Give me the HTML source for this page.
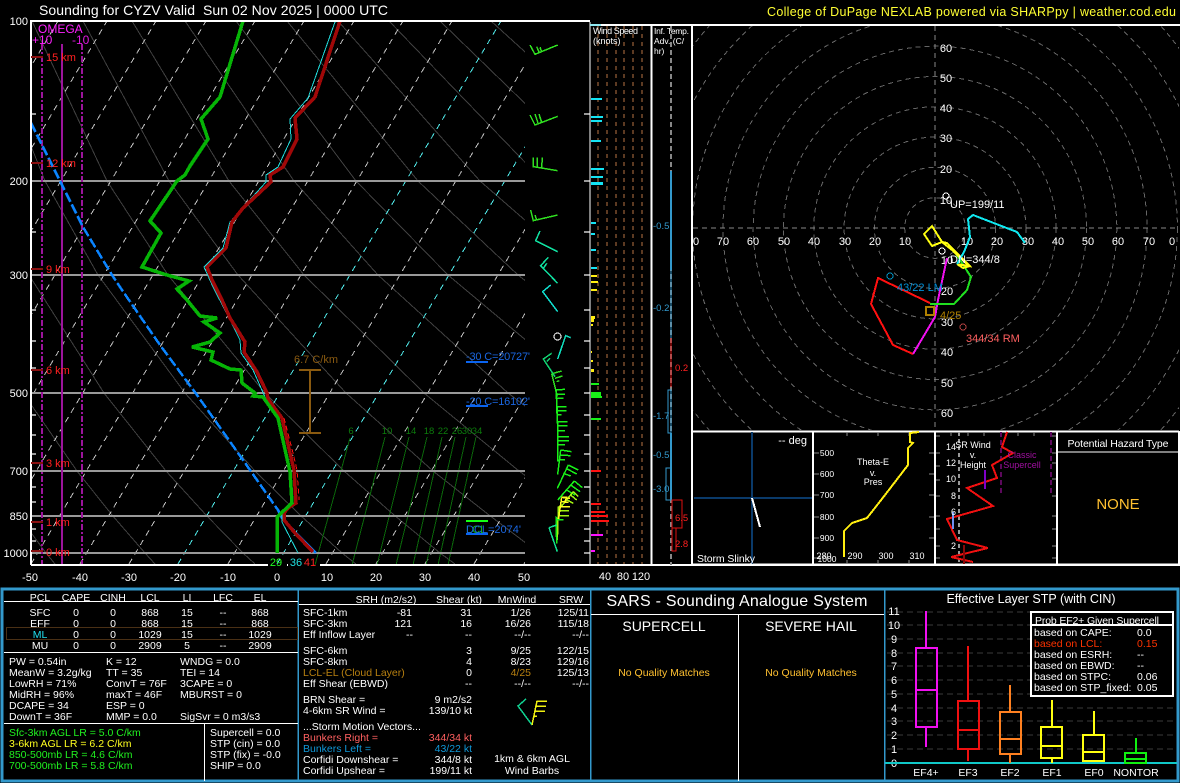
<!DOCTYPE html>
<html><head><meta charset="utf-8"><title>Sounding</title>
<style>
html,body{margin:0;padding:0;background:#000;width:1180px;height:783px;overflow:hidden}
svg{display:block}
text{font-family:"Liberation Sans",sans-serif;font-size:10.5px;fill:#fff;stroke:none;white-space:pre}
.e{text-anchor:end}.m{text-anchor:middle}
.a{font-size:11px}
.r{fill:#ff2020;font-size:11px}
.s{font-size:9px}
.t{font-size:8.5px}
.b{fill:#3399cc;font-size:9.5px}
.c{fill:#ff2020;font-size:9.5px}
.mx{fill:#0c7c0c;font-size:9.5px}
</style></head><body>
<svg width="1180" height="783" viewBox="0 0 1180 783" shape-rendering="crispEdges" fill="none">
<defs>
<clipPath id="sk"><rect x="31" y="21" width="494" height="544"/></clipPath>
<clipPath id="hd"><rect x="693" y="26" width="486" height="404"/></clipPath>
</defs>
<text x="39" y="15" style="font-size:14px" textLength="349" lengthAdjust="spacing">Sounding for CYZV Valid  Sun 02 Nov 2025 | 0000 UTC</text>
<text x="767" y="16" style="font-size:12.5px;fill:#ffff33" textLength="409" lengthAdjust="spacing">College of DuPage NEXLAB powered via SHARPpy | weather.cod.edu</text>

<g clip-path="url(#sk)">
<!-- dry adiabats -->
<g stroke="#404040" stroke-width="1">
<polyline points="-12,471 18,515 46,553 55,564"/>
<polyline points="23,393 77,471 112,515 145,553 155,564"/>
<polyline points="-41,275 23,393 77,471"/>
<polyline points="-17,181 29,275 104,393 166,471 206,515 243,553 255,564"/>
<polyline points="-19,21 45,181 98,275 185,393 255,471 300,515 342,553 356,564"/>
<polyline points="32,21 107,181 168,275 265,393 344,471 394,515 440,553 455,564"/>
<polyline points="83,21 169,181 238,275 346,393 433,471 489,515 539,553"/>
<polyline points="132,21 229,181 304,275 424,393 519,471 580,515"/>
<polyline points="185,21 294,181 378,275 508,393 611,471"/>
<polyline points="236,21 356,181 448,275 589,393"/>
<polyline points="287,21 418,181 518,275 670,393"/>
<polyline points="338,21 480,181 588,275"/>
<polyline points="389,21 543,181"/>
<polyline points="440,21 605,181"/>
<polyline points="491,21 667,181"/>
</g>
<!-- isotherms -->
<g stroke="#c0c0c0" stroke-width="1" stroke-dasharray="6 5">
<line x1="-265" y1="564" x2="58" y2="21"/>
<line x1="-216" y1="564" x2="107" y2="21"/>
<line x1="-167" y1="564" x2="156" y2="21"/>
<line x1="-117" y1="564" x2="206" y2="21"/>
<line x1="-68" y1="564" x2="255" y2="21"/>
<line x1="-19" y1="564" x2="304" y2="21"/>
<line x1="31" y1="564" x2="354" y2="21"/>
<line x1="80" y1="564" x2="403" y2="21"/>
<line x1="129" y1="564" x2="452" y2="21"/>
<line x1="228" y1="564" x2="551" y2="21"/>
<line x1="326" y1="564" x2="649" y2="21"/>
<line x1="376" y1="564" x2="699" y2="21"/>
<line x1="425" y1="564" x2="748" y2="21"/>
<line x1="474" y1="564" x2="797" y2="21"/>
<line x1="524" y1="564" x2="847" y2="21"/>
</g>
<g stroke="#50e8e8" stroke-width="1" stroke-dasharray="6 5">
<line x1="178" y1="564" x2="501" y2="21"/>
<line x1="277" y1="564" x2="600" y2="21"/>
</g>
<!-- mixing ratio -->
<g stroke="#0a660a" stroke-width="1">
<line x1="350" y1="438" x2="315" y2="565"/>
<line x1="385" y1="437" x2="352" y2="565"/>
<line x1="409" y1="437" x2="377" y2="565"/>
<line x1="427" y1="437" x2="396" y2="565"/>
<line x1="442" y1="437" x2="413" y2="565"/>
<line x1="455" y1="437" x2="426" y2="565"/>
<line x1="466" y1="437" x2="438" y2="565"/>
<line x1="476" y1="437" x2="448" y2="565"/>
</g>
<!-- pressure lines -->
<g stroke="#999" stroke-width="2">
<line x1="31" x2="525" y1="181" y2="181"/>
<line x1="31" x2="525" y1="275" y2="275"/>
<line x1="31" x2="525" y1="393" y2="393"/>
<line x1="31" x2="525" y1="471" y2="471"/>
<line x1="31" x2="525" y1="516" y2="516"/>
<line x1="31" x2="525" y1="553" y2="553"/>
</g>
<!-- omega -->
<line x1="62" y1="44" x2="62" y2="565" stroke="#9c149c" stroke-width="2"/>
<line x1="42" y1="44" x2="42" y2="565" stroke="#9c149c" stroke-width="2" stroke-dasharray="6 2 2 2"/>
<line x1="82" y1="44" x2="82" y2="565" stroke="#9c149c" stroke-width="2" stroke-dasharray="6 2 2 2"/>
<!-- parcel -->
<polyline points="31,123 60,181 83,227 112,275 122,290 160,345 197,395 243,460 278,510" stroke="#0a84ff" stroke-width="2.5" stroke-dasharray="10 3"/>
<polyline points="278,510 282,518 298,535 316,553" stroke="#0a84ff" stroke-width="2.5"/>
<!-- temp -->
<polyline points="335,22 308,98 290,119 291,139 278,167 266,175 266,182 230,222 223,248 204,267 213,287 230,320 240,340 241,353 253,370 265,397 278,418 290,472 292,503 282,513 282,522 298,553" stroke="#20d8d8" stroke-width="1"/>
<polyline points="340,21 315,97 295,118 297,139 283,167 270,175 271,182 243,208 232,222 226,248 207,267 212,280 222,300 230,318 245,342 244,352 257,372 267,393 268,399 282,418 290,453 294,470 296,503 288,508 284,513 284,520 295,533 313,552" stroke="#a00808" stroke-width="3.5"/>
<polyline points="284,418 293,453 297,470 299,500" stroke="#ff1010" stroke-width="1" stroke-dasharray="5 3"/>
<polyline points="243,21 220,97 201,119 208,139 190,166 185,175 177,181 150,221 161,233 142,267 167,275 189,281 177,289 187,300 200,316 217,318 204,322 220,333 210,342 192,347 213,352 211,360 230,369 241,370 242,383 255,393 253,396 263,397 278,418 290,472 292,503 277,517 277,553" stroke="#06b406" stroke-width="3.5"/>
</g>
<g stroke="#999" stroke-width="2">
<path d="M31 114h5M31 232h5M31 310h5M31 341h5M31 368h5M31 415h5M31 435h5M31 454h5M31 487h5M31 502h5M31 529h5M31 541h5"/>
<path d="M584 114h6M584 181h6M584 232h6M584 275h6M584 310h6M584 341h6M584 368h6M584 393h6M584 415h6M584 435h6M584 454h6M584 471h6M584 487h6M584 502h6M584 516h6M584 529h6M584 541h6M584 553h6"/>
</g>
<!-- frame -->
<path d="M31 565V21H590" stroke="#fff" stroke-width="2"/>
<path d="M31 565H268M287 565H288M320 565H1180" stroke="#fff" stroke-width="2"/>
<g stroke="#8a1010" stroke-width="2">
<path d="M31 57h12M31 163h12M31 269h12M31 370h12M31 463h12M31 522h12M31 551h12"/>
</g>
<text class="r" x="46" y="61">15 km</text>
<text class="r" x="46" y="167">12 km</text>
<text class="r" x="46" y="273">9 km</text>
<text class="r" x="46" y="374">6 km</text>
<text class="r" x="46" y="467">3 km</text>
<text class="r" x="46" y="526">1 km</text>
<text class="r" x="46" y="556">0 km</text>
<text x="38" y="33" style="fill:#ff20ff;font-size:12px">OMEGA</text>
<text x="32" y="44" style="fill:#ff20ff;font-size:12px">+10</text>
<text x="72" y="44" style="fill:#e018e0;font-size:12px">-10</text>
<g class="a">
<text class="a e" x="28" y="25">100</text>
<text class="a e" x="28" y="185">200</text>
<text class="a e" x="28" y="279">300</text>
<text class="a e" x="28" y="397">500</text>
<text class="a e" x="28" y="475">700</text>
<text class="a e" x="28" y="520">850</text>
<text class="a e" x="28" y="557">1000</text>
<text class="a m" x="30" y="581">-50</text>
<text class="a m" x="80" y="581">-40</text>
<text class="a m" x="129" y="581">-30</text>
<text class="a m" x="178" y="581">-20</text>
<text class="a m" x="228" y="581">-10</text>
<text class="a m" x="277" y="581">0</text>
<text class="a m" x="327" y="581">10</text>
<text class="a m" x="376" y="581">20</text>
<text class="a m" x="425" y="581">30</text>
<text class="a m" x="474" y="581">40</text>
<text class="a m" x="524" y="581">50</text>
<text class="a m" x="605" y="580">40</text>
<text class="a m" x="623" y="580">80</text>
<text class="a m" x="641" y="580">120</text>
</g>
<text class="a m" x="276" y="566" style="fill:#20ff20">29</text>
<text class="a m" x="296" y="566" style="fill:#20e0e0">36</text>
<text class="a m" x="310" y="566" style="fill:#ff2020">41</text>
<g class="mx">
<text class="mx m" x="351" y="434">6</text>
<text class="mx m" x="387" y="434">10</text>
<text class="mx m" x="411" y="434">14</text>
<text class="mx m" x="429" y="434">18</text>
<text class="mx m" x="443" y="434">22</text>
<text class="mx m" x="457" y="434">26</text>
<text class="mx m" x="467" y="434">30</text>
<text class="mx m" x="477" y="434">34</text>
</g>
<!-- lapse rate -->
<path d="M299 370h22M299 433h22M310 370v63" stroke="#8a5a10" stroke-width="2"/>
<text x="294" y="363" class="a" style="fill:#8a5a10">6.7 C/km</text>
<!-- levels -->
<path d="M466 362h22M466 406h22M466 534h22" stroke="#0a64f0" stroke-width="2"/>
<path d="M466 521h22" stroke="#14ff14" stroke-width="2"/>
<text x="466" y="360" class="a" style="fill:#1a66e0" textLength="64">-30 C=20727'</text>
<text x="466" y="405" class="a" style="fill:#1a66e0" textLength="64">-20 C=16102'</text>
<text x="466" y="533" class="a" style="fill:#10c010">LCL</text>
<text x="466" y="533" class="a" style="fill:#1a66e0">DCL=2074'</text>
<!-- barbs upper -->
<g transform="translate(520 0) scale(.33333)" stroke-width="4.5" stroke="#30e020">
<path d="M113 135L45 163L30 135M58 158L50 140M65 155L60 142"/>
<path d="M113 349L45 375L30 345M55 372L45 342M65 367L57 342"/>
<path d="M113 512L40 500L40 472M52 502L52 472M65 504L67 472"/>
<path d="M113 645L40 662L32 630M50 660L45 645"/>
<path stroke="#10e0a0" d="M113 755L47 722L60 693"/>
<path stroke="#10e0a0" d="M113 850L62 797L85 772M70 805L80 790"/>
</g>
<g transform="translate(530 290) scale(.33333)" stroke-width="4.5" stroke="#30e020">
<path stroke="#10e0d0" d="M83 65L38 5L62 -15"/>
<path stroke="#10e0c0" d="M83 207L107 137L122 143"/>
<path stroke="#10d070" d="M75 260L40 207L65 190M50 215L60 205"/>
<path d="M65 250L82 320M70 250L95 243M75 265L97 258M80 275L88 272"/>
<path stroke="#18f018" d="M78 300L82 370M78 300L105 298M78 313L105 312M80 325L100 325"/>
<path stroke="#18f018" d="M80 350L83 410M80 350L110 350M81 362L110 362M82 375L95 375"/>
<path stroke="#18f018" d="M83 395L84 470M83 395L113 395M83 408L113 408M84 422L105 422"/>
<path stroke="#18f018" d="M84 440L84 515M84 440L117 440M84 452L117 452M84 465L105 465"/>
<path stroke="#18f018" d="M92 480L83 553M92 480L125 485M90 495L122 497M88 510L105 510"/>
<path stroke="#18f018" d="M115 525L82 595M115 525L145 540M108 535L140 552M100 550L122 558"/>
<path stroke="#18f018" d="M133 573L83 630M133 573L157 593M122 585L150 605M110 600L135 615"/>
<path stroke="#a0f010" d="M130 605L85 660M130 605L145 620M122 615L140 630M112 630L130 640"/>
<path stroke="#a0f010" d="M85 650L82 750M85 650L120 650M85 662L117 662M85 677L117 677"/>
<path stroke="#ffff20" d="M95 622L85 690M95 622L120 625M92 635L115 637M90 650L120 650M95 622H110L105 635"/>
<path stroke="#18f018" d="M78 680L80 760M78 690L100 690"/>
<path stroke="#10e090" d="M57 713L82 785M57 713L80 705"/>
</g>
<circle cx="557.5" cy="336.5" r="3.5" stroke="#fff" stroke-width="1"/>
<!-- speed panel -->
<g stroke="#5c3a22" stroke-width="2" stroke-dasharray="4 4">
<path d="M598 26V564M607 26V564M616 26V564M624 26V564M633 26V564M642 26V564"/>
</g>
<line x1="590" y1="22" x2="590" y2="565" stroke="#fff" stroke-width="1"/>
<path d="M590 25H692" stroke="#fff" stroke-width="2"/>
<path d="M590 25h11" stroke="#20d0e0" stroke-width="1"/>
<path d="M651.500 25V565M692 25V565" stroke="#fff" stroke-width="2"/>
<g stroke="#14e4f4" stroke-width="2">
<path d="M591 99h11M591 117h12M591 121h11M591 141h10M591 169h13M591 177h12M591 184h12M591 223h5M591 234h4M591 250h5M591 268h6"/>
<path d="M591 183h12"/>
</g>
<g stroke="#ffee10" stroke-width="2">
<path d="M591 276h6M591 282h7M591 290h6M591 317h4M591 320h3M591 325h2M591 352h1M591 361h2M591 370h3M591 318h4M591 321h3M591 371h3"/>
</g>
<g stroke="#18f018" stroke-width="2">
<path d="M591 384h8M591 393h10M591 395h10M591 397h11M591 419h10"/>
</g>
<g stroke="#ff1010" stroke-width="2">
<path d="M591 471h10M591 504h10M591 512h14M591 516h17M591 521h18"/>
</g>
<g stroke="#ff10ff" stroke-width="2">
<path d="M591 535h12M591 551h4"/>
</g>
<text class="s" x="593" y="34" textLength="45">Wind Speed</text>
<text class="s" x="593" y="44">(knots)</text>
<text class="t" x="654" y="34" textLength="35">Inf. Temp.</text>
<text class="t" x="654" y="44">Adv. (C/</text>
<text class="t" x="654" y="54">hr)</text>
<!-- temp adv -->
<line x1="671" y1="26" x2="671" y2="565" stroke="#888" stroke-width="2" stroke-dasharray="5 3"/>
<line x1="671" y1="171" x2="671" y2="270" stroke="#3399cc" stroke-width="2"/>
<line x1="671" y1="270" x2="671" y2="338" stroke="#3399cc" stroke-width="1"/>
<line x1="671" y1="338" x2="671" y2="387" stroke="#e01010" stroke-width="1"/>
<line x1="671" y1="433" x2="671" y2="500" stroke="#3399cc" stroke-width="2"/>
<rect x="668" y="390" width="3" height="43" stroke="#3399cc"/>
<rect x="666" y="468" width="5" height="32" stroke="#3399cc"/>
<rect x="672" y="500" width="10" height="28" stroke="#e01010"/>
<rect x="672" y="528" width="4" height="23" stroke="#e01010"/>
<text class="b" x="653" y="229">-0.5</text>
<text class="b" x="653" y="311">-0.2</text>
<text class="b" x="653" y="419">-1.7</text>
<text class="b" x="653" y="458">-0.5</text>
<text class="b" x="653" y="492">-3.0</text>
<text class="c" x="675" y="371">0.2</text>
<text class="c" x="675" y="521">6.5</text>
<text class="c" x="675" y="547">2.8</text>
<!-- hodo -->
<g clip-path="url(#hd)">
<g stroke="#666" stroke-width="1" stroke-dasharray="5 4">
<circle cx="935" cy="228" r="30.3"/><circle cx="935" cy="228" r="60.6"/><circle cx="935" cy="228" r="90.9"/><circle cx="935" cy="228" r="121.2"/><circle cx="935" cy="228" r="151.5"/><circle cx="935" cy="228" r="181.8"/><circle cx="935" cy="228" r="212"/><circle cx="935" cy="228" r="242.4"/><circle cx="935" cy="228" r="272.7"/><circle cx="935" cy="228" r="303"/>
</g>
<path d="M693 228H1180M935 26V430" stroke="#888" stroke-width="1" stroke-dasharray="5 4"/>
</g>
<g>
<text class="a m" x="946" y="52">60</text><text class="a m" x="946" y="82">50</text><text class="a m" x="946" y="112">40</text><text class="a m" x="946" y="142">30</text><text class="a m" x="946" y="173">20</text><text class="a m" x="946" y="204">10</text>
<text class="a m" x="947" y="264">10</text><text class="a m" x="947" y="295">20</text><text class="a m" x="947" y="326">30</text><text class="a m" x="947" y="356">40</text><text class="a m" x="947" y="387">50</text><text class="a m" x="947" y="417">60</text>
<text class="a m" x="696" y="245">0</text><text class="a m" x="723" y="245">70</text><text class="a m" x="753" y="245">60</text><text class="a m" x="784" y="245">50</text><text class="a m" x="814" y="245">40</text><text class="a m" x="845" y="245">30</text><text class="a m" x="875" y="245">20</text><text class="a m" x="905" y="245">10</text>
<text class="a m" x="967" y="245">10</text><text class="a m" x="997" y="245">20</text><text class="a m" x="1028" y="245">30</text><text class="a m" x="1058" y="245">40</text><text class="a m" x="1088" y="245">50</text><text class="a m" x="1118" y="245">60</text><text class="a m" x="1149" y="245">70</text><text class="a m" x="1172" y="245">0</text>
</g>
<polyline points="930,303 878,278 871,304 893,345 913,354" stroke="#ff1010" stroke-width="2"/>
<polyline points="913,354 935,317 938,300 947,258" stroke="#f010f0" stroke-width="2"/>
<polyline points="930,304 954,304 967,290 971,277 960,260 952,248" stroke="#20e020" stroke-width="2"/>
<polyline points="957,264 969,266 952,250 942,242 932,246 924,234 932,226 942,242 947,243 970,266 963,268 957,264" stroke="#ffff10" stroke-width="2"/>
<polyline points="957,264 964,252 970,237 968,219 973,215 1017,232 1025,243" stroke="#10e8f0" stroke-width="2"/>
<circle cx="946" cy="196" r="3" stroke="#fff" stroke-width="1"/>
<circle cx="942" cy="251" r="3" stroke="#fff" stroke-width="1"/>
<circle cx="890" cy="276" r="3" stroke="#0090c0" stroke-width="1"/>
<circle cx="963" cy="327" r="3" stroke="#b04040" stroke-width="1"/>
<rect x="926" y="307" width="8" height="8" stroke="#b08000" stroke-width="2"/>
<text class="a" x="950" y="208">UP=199/11</text>
<text class="a" x="950" y="263">DN=344/8</text>
<text class="a" x="897" y="291" style="fill:#0090d8">43/22 LM</text>
<text class="a" x="940" y="319" style="fill:#b08000">4/25</text>
<text class="a" x="966" y="342" style="fill:#ff6060">344/34 RM</text>
<!-- lower panels -->
<path d="M692 431.500H1179M692 564.500H1179M692 25V565M813 431V565M935 431V565M1057 431V565M1179 431V565" stroke="#fff" stroke-width="2"/>
<path d="M692 25H1180" stroke="#fff" stroke-width="2"/>
<path d="M1058 452H1178" stroke="#fff" stroke-width="1"/>
<path d="M752 432V564M694 498H812" stroke="#0a3a6a" stroke-width="2"/>
<line x1="752" y1="498" x2="760" y2="527" stroke="#fff" stroke-width="2"/>
<text class="a e" x="807" y="444">-- deg</text>
<text x="697" y="562" textLength="58">Storm Slinky</text>
<g stroke="#888" stroke-width="1">
<path d="M814 453h5M814 474h5M814 495h5M814 517h5M814 538h5M814 558h5M929 453h5M929 474h5M929 495h5M929 517h5M929 538h5"/>
<path d="M847 432v4M878 432v4M909 432v4M847 560v4M878 560v4M909 560v4"/>
<path d="M936 436h4M936 453h4M936 466h4M936 480h4M936 496h4M936 516h4M936 529h4M936 546h4M936 558h4"/>
<path d="M1052 436h4M1052 453h4M1052 463h4M1052 479h4M1052 496h4M1052 516h4M1052 529h4M1052 546h4M1052 558h4"/>
<path d="M951 432v4M968 432v4M984 432v4M1001 432v4M1018 432v4M1034 432v4M1051 432v4"/>
</g>
<polyline points="919,432 910,433 910,442 913,443 908,448 908,465 885,495 867,518 852,523 844,531 844,557" stroke="#ffee10" stroke-width="2"/>
<g>
<text class="t m" x="827" y="456">500</text><text class="t m" x="827" y="477">600</text><text class="t m" x="827" y="498">700</text><text class="t m" x="827" y="520">800</text><text class="t m" x="827" y="541">900</text><text class="t m" x="827" y="562">1000</text>
<text class="s m" x="824" y="559">280</text><text class="s m" x="855" y="559">290</text><text class="s m" x="886" y="559">300</text><text class="s m" x="917" y="559">310</text>
</g>
<text class="s m" x="873" y="465">Theta-E</text><text class="s m" x="873" y="476">v.</text><text class="s m" x="873" y="485">Pres</text>
<line x1="959" y1="432" x2="959" y2="564" stroke="#999" stroke-width="2" stroke-dasharray="4 3"/>
<path d="M1001 432V495M1051 432V495" stroke="#5c085c" stroke-width="2" stroke-dasharray="5 3"/>
<polyline points="1007,432 1002,447 1013,453 992,465 997,478 967,488 993,506 947,519 957,540 988,548 951,557 973,562" stroke="#f01010" stroke-width="2"/>
<line x1="985" y1="470" x2="985" y2="489" stroke="#8000c8" stroke-width="2"/>
<line x1="953" y1="512" x2="953" y2="529" stroke="#7090f0" stroke-width="2"/>
<line x1="964" y1="545" x2="964" y2="564" stroke="#8a0808" stroke-width="2"/>
<text class="s m" x="973" y="448">SR Wind</text><text class="s m" x="973" y="458">v.</text><text class="s m" x="973" y="468">Height</text>
<text class="s m" x="1022" y="458" style="fill:#a010a0">Classic</text><text class="s m" x="1022" y="468" style="fill:#a010a0">Supercell</text>
<g>
<text class="s e" x="956" y="450">14</text><text class="s e" x="956" y="466">12</text><text class="s e" x="956" y="482">10</text><text class="s e" x="956" y="499">8</text><text class="s e" x="956" y="515">6</text><text class="s e" x="956" y="549">2</text>
</g>
<text class="m" x="1118" y="447" textLength="101">Potential Hazard Type</text>
<text class="m" x="1118" y="509" style="font-size:15px;fill:#ffc030">NONE</text>
<!-- bottom -->
<rect x="2" y="589" width="1176" height="192" stroke="#3399cc" stroke-width="3"/>
<path d="M298 589V781M590.500 589V781M884.500 589V781" stroke="#3399cc" stroke-width="1.500"/>
<path d="M4 601.500H298M4 652.500H298M4 723.500H298M204.500 724V781M299 604.500H590M591 614.500H884M738.500 615V781" stroke="#fff" stroke-width="1"/>
<rect x="6.500" y="627.500" width="291" height="12" stroke="#4a3015" stroke-width="1"/>
<!-- box1 -->
<g>
<text class="m" x="40" y="601">PCL</text><text class="m" x="76" y="601">CAPE</text><text class="m" x="113" y="601">CINH</text><text class="m" x="150" y="601">LCL</text><text class="m" x="187" y="601">LI</text><text class="m" x="223" y="601">LFC</text><text class="m" x="260" y="601">EL</text>
<text class="m" x="40" y="616">SFC</text><text class="m" x="76" y="616">0</text><text class="m" x="113" y="616">0</text><text class="m" x="150" y="616">868</text><text class="m" x="187" y="616">15</text><text class="m" x="223" y="616">--</text><text class="m" x="260" y="616">868</text>
<text class="m" x="40" y="627">EFF</text><text class="m" x="76" y="627">0</text><text class="m" x="113" y="627">0</text><text class="m" x="150" y="627">868</text><text class="m" x="187" y="627">15</text><text class="m" x="223" y="627">--</text><text class="m" x="260" y="627">868</text>
<text class="m" x="40" y="638" style="fill:#20e0f0">ML</text><text class="m" x="76" y="638">0</text><text class="m" x="113" y="638">0</text><text class="m" x="150" y="638">1029</text><text class="m" x="187" y="638">15</text><text class="m" x="223" y="638">--</text><text class="m" x="260" y="638">1029</text>
<text class="m" x="40" y="649">MU</text><text class="m" x="76" y="649">0</text><text class="m" x="113" y="649">0</text><text class="m" x="150" y="649">2909</text><text class="m" x="187" y="649">5</text><text class="m" x="223" y="649">--</text><text class="m" x="260" y="649">2909</text>
<text x="9" y="665">PW = 0.54in</text><text x="106" y="665">K = 12</text><text x="180" y="665">WNDG = 0.0</text>
<text x="9" y="676">MeanW = 3.2g/kg</text><text x="106" y="676">TT = 35</text><text x="180" y="676">TEI = 14</text>
<text x="9" y="687">LowRH = 71%</text><text x="106" y="687">ConvT = 76F</text><text x="180" y="687">3CAPE = 0</text>
<text x="9" y="698">MidRH = 96%</text><text x="106" y="698">maxT = 46F</text><text x="180" y="698">MBURST = 0</text>
<text x="9" y="709">DCAPE = 34</text><text x="106" y="709">ESP = 0</text>
<text x="9" y="720">DownT = 36F</text><text x="106" y="720">MMP = 0.0</text><text x="180" y="720">SigSvr = 0 m3/s3</text>
<text x="9" y="736" style="fill:#20f020">Sfc-3km AGL LR = 5.0 C/km</text>
<text x="9" y="747" style="fill:#ffff20">3-6km AGL LR = 6.2 C/km</text>
<text x="9" y="758" style="fill:#20f020">850-500mb LR = 4.6 C/km</text>
<text x="9" y="769" style="fill:#20f020">700-500mb LR = 5.8 C/km</text>
<text x="210" y="736">Supercell = 0.0</text><text x="210" y="747">STP (cin) = 0.0</text><text x="210" y="758">STP (fix) = -0.0</text><text x="210" y="769">SHIP = 0.0</text>
</g>
<!-- box2 -->
<g>
<text class="m" x="386" y="603">SRH (m2/s2)</text><text class="m" x="459" y="603">Shear (kt)</text><text class="m" x="517" y="603">MnWind</text><text class="m" x="571" y="603">SRW</text>
<text x="303" y="616">SFC-1km</text><text class="e" x="412" y="616">-81</text><text class="e" x="472" y="616">31</text><text class="e" x="531" y="616">1/26</text><text class="e" x="589" y="616">125/11</text>
<text x="303" y="627">SFC-3km</text><text class="e" x="412" y="627">121</text><text class="e" x="472" y="627">16</text><text class="e" x="531" y="627">16/26</text><text class="e" x="589" y="627">115/18</text>
<text x="303" y="638">Eff Inflow Layer</text><text class="e" x="413" y="638">--</text><text class="e" x="472" y="638">--</text><text class="e" x="531" y="638">--/--</text><text class="e" x="589" y="638">--/--</text>
<text x="303" y="654">SFC-6km</text><text class="e" x="472" y="654">3</text><text class="e" x="531" y="654">9/25</text><text class="e" x="589" y="654">122/15</text>
<text x="303" y="665">SFC-8km</text><text class="e" x="472" y="665">4</text><text class="e" x="531" y="665">8/23</text><text class="e" x="589" y="665">129/16</text>
<text x="303" y="676" style="fill:#b88010">LCL-EL (Cloud Layer)</text><text class="e" x="472" y="676">0</text><text class="e" x="531" y="676" style="fill:#b88010">4/25</text><text class="e" x="589" y="676">125/13</text>
<text x="303" y="687">Eff Shear (EBWD)</text><text class="e" x="472" y="687">--</text><text class="e" x="531" y="687">--/--</text><text class="e" x="589" y="687">--/--</text>
<text x="303" y="703">BRN Shear =</text><text class="e" x="472" y="703">9 m2/s2</text>
<text x="303" y="714">4-6km SR Wind =</text><text class="e" x="472" y="714">139/10 kt</text>
<text x="303" y="730">...Storm Motion Vectors...</text>
<text x="303" y="741" style="fill:#ff6060">Bunkers Right =</text><text class="e" x="472" y="741" style="fill:#ff6060">344/34 kt</text>
<text x="303" y="752" style="fill:#1098d8">Bunkers Left =</text><text class="e" x="472" y="752" style="fill:#1098d8">43/22 kt</text>
<text x="303" y="763">Corfidi Downshear =</text><text class="e" x="472" y="763">344/8 kt</text>
<text x="303" y="774">Corfidi Upshear =</text><text class="e" x="472" y="774">199/11 kt</text>
<text class="m" x="532" y="762">1km &amp; 6km AGL</text><text class="m" x="532" y="774">Wind Barbs</text>
</g>
<path d="M532 725L518 706L526 699" stroke="#10d090" stroke-width="1.5"/>
<path d="M532 725L537 701H547M536 706H546M535 711H545M534 716H537" stroke="#f0f010" stroke-width="1.5"/>
<!-- box3 -->
<text class="m" x="737" y="606" style="font-size:16px" textLength="261">SARS - Sounding Analogue System</text>
<text class="m" x="664" y="631" style="font-size:14px">SUPERCELL</text>
<text class="m" x="811" y="631" style="font-size:14px">SEVERE HAIL</text>
<text class="m" x="664" y="676" style="font-size:10.500px;fill:#ffc030">No Quality Matches</text>
<text class="m" x="811" y="676" style="font-size:10.500px;fill:#ffc030">No Quality Matches</text>
<!-- box4 -->
<text class="m" x="1031" y="603" style="font-size:12.500px">Effective Layer STP (with CIN)</text>
<g stroke="#3a3a3a" stroke-width="1" stroke-dasharray="6 4">
<path d="M887 612H1177M887 625H1177M887 639H1177M887 653H1177M887 666H1177M887 680H1177M887 694H1177M887 708H1177M887 721H1177M887 735H1177M887 749H1177"/>
</g>
<g>
<text class="a m" x="894" y="615">11</text><text class="a m" x="894" y="629">10</text><text class="a m" x="894" y="643">9</text><text class="a m" x="894" y="657">8</text><text class="a m" x="894" y="670">7</text><text class="a m" x="894" y="684">6</text><text class="a m" x="894" y="698">5</text><text class="a m" x="894" y="712">4</text><text class="a m" x="894" y="725">3</text><text class="a m" x="894" y="739">2</text><text class="a m" x="894" y="753">1</text><text class="a m" x="894" y="767">0</text>
</g>
<path d="M885 763H1177" stroke="#10c8c8" stroke-width="2"/>
<g stroke-width="2">
<path stroke="#f010f0" d="M926 611V648M926 727V747M916 648H937V727H916ZM916 690H937"/>
<path stroke="#f01010" d="M968 646V701M968 749V761M958 701H979V749H958ZM958 730H979"/>
<path stroke="#ff8020" d="M1010 685V712M1010 754V763M1000 712H1021V754H1000ZM1000 739H1021"/>
<path stroke="#ffff10" d="M1052 700V727M1052 758V763M1041 727H1062V758H1041ZM1041 746H1062"/>
<path stroke="#ffff10" d="M1094 711V735M1083 735H1104V761H1083ZM1083 752H1104"/>
<path stroke="#10f010" d="M1136 738V753M1125 753H1146V763H1125ZM1125 759H1146"/>
</g>
<text class="m" x="926" y="776">EF4+</text><text class="m" x="968" y="776">EF3</text><text class="m" x="1010" y="776">EF2</text><text class="m" x="1052" y="776">EF1</text><text class="m" x="1094" y="776">EF0</text><text class="m" x="1136" y="776">NONTOR</text>
<rect x="1031" y="612" width="142" height="84" fill="#000" stroke="#fff" stroke-width="2"/>
<path d="M1031 625H1173" stroke="#fff" stroke-width="2"/>
<text x="1035" y="624" textLength="124">Prob EF2+ Given Supercell</text>
<text x="1034" y="636">based on CAPE:</text><text x="1137" y="636">0.0</text>
<text x="1034" y="647" style="fill:#ff3300">based on LCL:</text><text x="1137" y="647" style="fill:#ff3300">0.15</text>
<text x="1034" y="658">based on ESRH:</text><text x="1137" y="658">--</text>
<text x="1034" y="669">based on EBWD:</text><text x="1137" y="669">--</text>
<text x="1034" y="680">based on STPC:</text><text x="1137" y="680">0.06</text>
<text x="1034" y="691">based on STP_fixed:</text><text x="1137" y="691">0.05</text>
</svg>
</body></html>
